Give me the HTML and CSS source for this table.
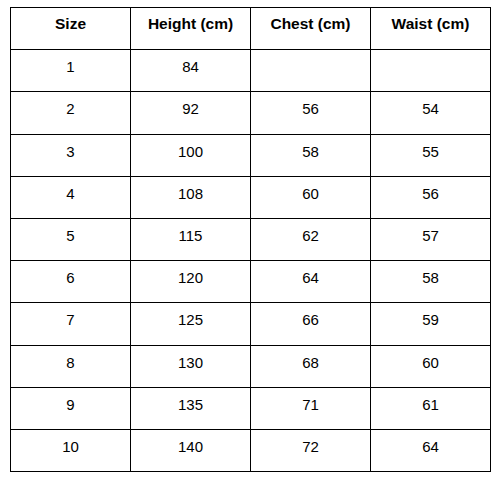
FILE: index.html
```html
<!DOCTYPE html>
<html>
<head>
<meta charset="utf-8">
<link rel="stylesheet" href="styles.css">
</head>
<body>
<table class="size-table">
  <thead>
    <tr><th>Size</th><th>Height (cm)</th><th>Chest (cm)</th><th>Waist (cm)</th></tr>
  </thead>
  <tbody>
    <tr><td>1</td><td>84</td><td></td><td></td></tr>
    <tr><td>2</td><td>92</td><td>56</td><td>54</td></tr>
    <tr><td>3</td><td>100</td><td>58</td><td>55</td></tr>
    <tr><td>4</td><td>108</td><td>60</td><td>56</td></tr>
    <tr><td>5</td><td>115</td><td>62</td><td>57</td></tr>
    <tr><td>6</td><td>120</td><td>64</td><td>58</td></tr>
    <tr><td>7</td><td>125</td><td>66</td><td>59</td></tr>
    <tr><td>8</td><td>130</td><td>68</td><td>60</td></tr>
    <tr><td>9</td><td>135</td><td>71</td><td>61</td></tr>
    <tr><td>10</td><td>140</td><td>72</td><td>64</td></tr>
  </tbody>
</table>
</body>
</html>
```
FILE: styles.css
```css
html, body {
  margin: 0;
  padding: 0;
  background: #ffffff;
}
body {
  padding: 7px 0 0 10px;
  font-family: "Liberation Sans", Arial, sans-serif;
  color: #000;
}
.size-table {
  border-collapse: collapse;
  table-layout: fixed;
  width: 480px;
}
.size-table th,
.size-table td {
  border: 1px solid #000;
  width: 120px;
  height: 42.2px;
  box-sizing: border-box;
  padding: 8px 4px 0;
  text-align: center;
  vertical-align: top;
  font-size: 15px;
  line-height: 17px;
}
.size-table th {
  font-weight: bold;
  font-size: 15.5px;
  padding-top: 7px;
}
```
